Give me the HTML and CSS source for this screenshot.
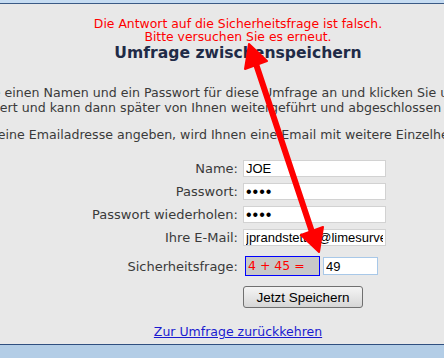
FILE: index.html
```html
<!DOCTYPE html>
<html lang="de">
<head>
    <meta charset="UTF-8">
    <meta name="viewport" content="width=device-width, initial-scale=1.0">
    <title>Umfrage zwischenspeichern</title>
    <link rel="stylesheet" href="styles.css">
</head>
<body>
    <div class="topbar"></div>
    <div class="page">
        <div class="error">
            Die Antwort auf die Sicherheitsfrage ist falsch.<br>
            Bitte versuchen Sie es erneut.
        </div>
        <h2>Umfrage zwischenspeichern</h2>
        <p class="intro">
            <span>Bitte geben Sie einen Namen und ein Passwort für diese Umfrage an und klicken Sie unten auf Speichern.</span>
            <span>Sie wird ja gespeichert und kann dann später von Ihnen weitergeführt und abgeschlossen werden, wann Sie wollen</span>
        </p>
        <p class="intro">
            <span>Wenn Sie eine Emailadresse angeben, wird Ihnen eine Email mit weitere Einzelheiten geschickt.</span>
        </p>
        <form class="save-form">
            <label for="name">Name:</label>
            <input type="text" id="name" value="JOE">

            <label for="pass">Passwort:</label>
            <input type="password" id="pass" value="1234">

            <label for="pass2">Passwort wiederholen:</label>
            <input type="password" id="pass2" value="1234">

            <label for="email">Ihre E-Mail:</label>
            <input type="text" id="email" value="jprandstetter@limesurvey.org">

            <label for="captcha" class="captcha-label">Sicherheitsfrage:</label>
            <div class="captcha-row">
                <span class="captcha">4 + 45 =</span>
                <input type="text" id="captcha" class="captcha-input" value="49">
            </div>

            <span></span>
            <div><button type="button">Jetzt Speichern</button></div>
        </form>
        <a class="back" href="#">Zur Umfrage zurückkehren</a>
    </div>
    <div class="bottombar"></div>

    <svg class="arrow" width="444" height="358" viewBox="0 0 444 358">
        <line x1="256" y1="64" x2="312" y2="232" stroke="#ff0000" stroke-width="6" stroke-linecap="round"/>
        <polygon points="249,44 267,61 245,69" fill="#ff0000" stroke="#ff0000" stroke-width="2" stroke-linejoin="round"/>
        <polygon points="319,252 323,227 301,235" fill="#ff0000" stroke="#ff0000" stroke-width="2" stroke-linejoin="round"/>
    </svg>
</body>
</html>
```

FILE: styles.css
```css
html, body {
    margin: 0;
    height: 358px;
    overflow: hidden;
}
body {
    position: relative;
    font-family: "DejaVu Sans", Verdana, sans-serif;
    background-color: #e8e8e8;
    color: #3a3a3a;
}
.topbar {
    height: 3px;
    background-color: #c6dcf2;
    border-bottom: 1px solid #3b5a85;
}
.page {
    width: 476px;
    height: 340px;
    display: flex;
    flex-direction: column;
    align-items: center;
    text-align: center;
}
.error {
    margin: 13px 0 1px;
    color: #ff0000;
    font-size: 12.4px;
    line-height: 13px;
}
h2 {
    margin: 0;
    font-size: 15.6px;
    line-height: 19px;
    color: #1f2b47;
    white-space: nowrap;
}
.intro {
    margin: 0;
    width: 476px;
    display: flex;
    flex-direction: column;
    align-items: center;
    font-size: 12.6px;
    line-height: 15px;
    white-space: nowrap;
}
.intro:first-of-type {
    margin-top: 22px;
}
.intro + .intro {
    margin-top: 12px;
}
.save-form {
    margin-top: 18px;
    width: 476px;
    display: grid;
    grid-template-columns: 238px 1fr;
    column-gap: 5px;
    row-gap: 6px;
    align-items: center;
    text-align: left;
}
.save-form label {
    justify-self: end;
    font-size: 13px;
    line-height: 17px;
}
.save-form input {
    box-sizing: border-box;
    width: 143px;
    height: 17px;
    padding: 0 2px;
    border: 1px solid #d2d2d2;
    background: #fff;
    font-family: "Liberation Sans", Arial, sans-serif;
    font-size: 13px;
    color: #000;
    outline: none;
}
.save-form input[type="password"] {
    font-size: 16px;
    letter-spacing: 1px;
}
.captcha-row {
    display: flex;
    align-items: center;
    gap: 3px;
    margin: 4px 0 0 2px;
}
.save-form .captcha-label {
    margin-top: 4px;
}
.captcha {
    box-sizing: border-box;
    width: 75px;
    height: 20px;
    padding-left: 2px;
    border: 1px solid #0000ff;
    background-color: #c8c8c8;
    color: #ff0000;
    font-size: 12.5px;
    line-height: 18px;
}
.save-form .captcha-input {
    width: 55px;
    height: 18px;
    border-color: #a8c8e8;
}
button {
    margin-top: 4px;
    width: 120px;
    height: 22px;
    border: 1px solid #707070;
    border-radius: 3px;
    background: linear-gradient(#f4f4f4, #e6e6e6 50%, #d6d6d6);
    font-family: "Liberation Sans", Arial, sans-serif;
    font-size: 13.5px;
    color: #000;
}
.back {
    margin-top: 16px;
    font-size: 12.5px;
    color: #1a1ad0;
}
.bottombar {
    height: 13px;
    background-color: #b3cde6;
    border-top: 1px solid #2f4f7f;
}
.arrow {
    position: absolute;
    left: 0;
    top: 0;
}
```
